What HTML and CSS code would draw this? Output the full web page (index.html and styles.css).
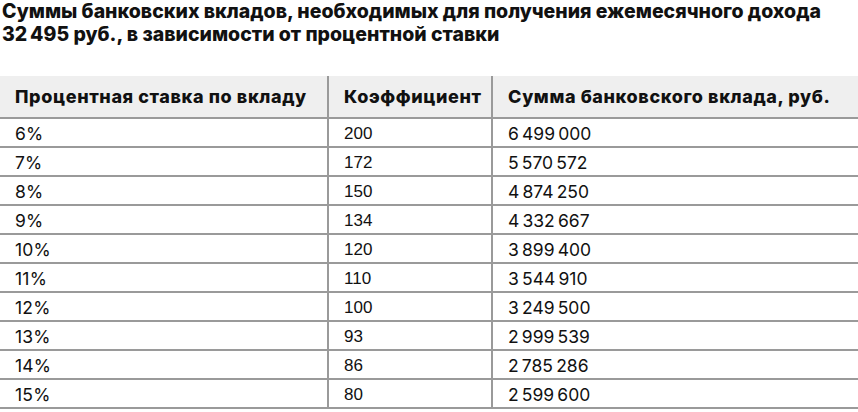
FILE: index.html
```html
<!DOCTYPE html>
<html lang="ru">
<head>
<meta charset="utf-8">
<link rel="stylesheet" href="styles.css">
</head>
<body>
<h1 class="title">Суммы банковских вкладов, необходимых для получения ежемесячного дохода 32&#8239;495 руб., в&nbsp;зависимости от процентной ставки</h1>
<table class="tbl">
<thead>
<tr><th class="c1">Процентная ставка по вкладу</th><th class="c2">Коэффициент</th><th class="c3">Сумма банковского вклада, руб.</th></tr>
</thead>
<tbody>
<tr><td>6%</td><td class="num">200</td><td>6&#8239;499&#8239;000</td></tr>
<tr><td>7%</td><td class="num">172</td><td>5&#8239;570&#8239;572</td></tr>
<tr><td>8%</td><td class="num">150</td><td>4&#8239;874&#8239;250</td></tr>
<tr><td>9%</td><td class="num">134</td><td>4&#8239;332&#8239;667</td></tr>
<tr><td>10%</td><td class="num">120</td><td>3&#8239;899&#8239;400</td></tr>
<tr><td>11%</td><td class="num">110</td><td>3&#8239;544&#8239;910</td></tr>
<tr><td>12%</td><td class="num">100</td><td>3&#8239;249&#8239;500</td></tr>
<tr><td>13%</td><td class="num">93</td><td>2&#8239;999&#8239;539</td></tr>
<tr><td>14%</td><td class="num">86</td><td>2&#8239;785&#8239;286</td></tr>
<tr><td>15%</td><td class="num">80</td><td>2&#8239;599&#8239;600</td></tr>
</tbody>
</table>
</body>
</html>
```
FILE: styles.css
```css
html, body {
  margin: 0;
  padding: 0;
  background: #ffffff;
  color: #111111;
}
body {
  width: 858px;
  height: 412px;
  overflow: hidden;
  font-family: "Inter", "Noto Sans", sans-serif;
}
.title {
  margin: 0;
  padding: 0 0 0 2px;
  font-size: 19.5px;
  line-height: 23px;
  font-weight: 800;
  letter-spacing: 0;
  color: #111;
}
.tbl {
  margin-top: 30px;
  width: 858px;
  border-collapse: collapse;
  font-size: 17.5px;
}
.tbl th {
  background: #efefef;
  height: 41px;
  text-align: left;
  font-weight: 800;
  font-size: 18px;
  letter-spacing: 0.6px;
  padding: 0 0 0 15px;
  border-bottom: 2px solid #9a9a9a;
  border-right: 2px solid #9a9a9a;
}
.tbl th:last-child, .tbl td:last-child {
  border-right: none;
}
.tbl .c1 { width: 312px; }
.tbl .c2 { width: 147px; }
.tbl td {
  height: 29px;
  padding: 2px 0 0 15px;
  box-sizing: border-box;
  border-bottom: 2px solid #9a9a9a;
  border-right: 2px solid #9a9a9a;
  font-weight: 400;
  letter-spacing: 0.2px;
}
.tbl .num {
  font-family: "Liberation Sans", Arial, sans-serif;
  font-size: 17px;
  letter-spacing: 0;
}
```
